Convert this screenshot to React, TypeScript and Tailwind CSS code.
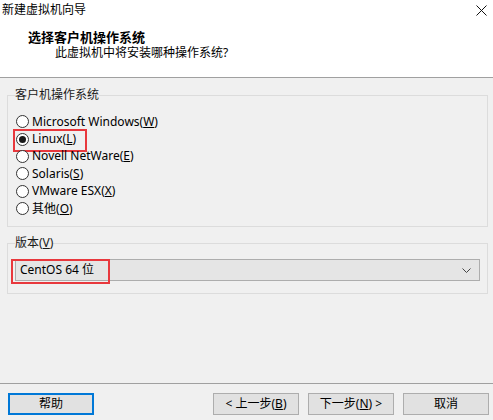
import React from "react";

const font = { fontFamily: '"Noto Sans", "Noto Sans CJK SC", sans-serif' };

const options = [
  { label: "Microsoft Windows", key: "W" },
  { label: "Linux", key: "L" },
  { label: "Novell NetWare", key: "E" },
  { label: "Solaris", key: "S" },
  { label: "VMware ESX", key: "X" },
  { label: "其他", key: "O" },
];

function Radio({ checked }: { checked?: boolean }) {
  return (
    <span className="flex h-[13px] w-[13px] items-center justify-center rounded-full border border-[#333333] bg-white">
      {checked && <span className="h-[7px] w-[7px] rounded-full bg-[#1a1a1a]" />}
    </span>
  );
}

function WinButton({ children, focused }: { children: React.ReactNode; focused?: boolean }) {
  return (
    <button
      className={
        "flex h-[22px] w-[86px] items-center justify-center bg-[#e1e1e1] text-[12px] text-black " +
        (focused ? "border-2 border-[#0078d7]" : "border border-[#adadad]")
      }
    >
      {children}
    </button>
  );
}

export default function App() {
  return (
    <div className="flex h-[420px] w-[493px] flex-col overflow-hidden bg-[#f0f0f0] text-[12px] leading-[16px] text-black" style={font}>
      {/* header */}
      <div className="flex h-[77px] flex-col bg-white">
        <div className="mt-[2px] flex h-[16px] items-center justify-between pl-[2px] pr-[6px]">
          <span>新建虚拟机向导</span>
          <svg width="11" height="11" viewBox="0 0 11 11" className="mt-[1px]">
            <path d="M0.5 0.5 L10.5 10.5 M10.5 0.5 L0.5 10.5" stroke="#111" strokeWidth="1" />
          </svg>
        </div>
        <div className="ml-[28px] mt-[11px] h-[16px] text-[13px] font-bold">选择客户机操作系统</div>
        <div className="ml-[55px] h-[16px]">此虚拟机中将安装哪种操作系统?</div>
      </div>
      <div className="h-px bg-[#a0a0a0]" />

      {/* guest OS group */}
      <fieldset className="ml-[7px] mr-[5px] mt-[9px] border border-[#dcdcdc] px-0 pb-[9px] pt-0">
        <legend className="ml-[7px] px-0 text-[#1a1a1a]">客户机操作系统</legend>
        <div className="mt-[10px] flex flex-col">
          {options.map((o) => (
            <div key={o.key} className="relative flex h-[17.4px] items-center pl-[8px]">
              <Radio checked={o.key === "L"} />
              <span className="ml-[3px]">
                {o.label}(<u>{o.key}</u>)
              </span>
              {o.key === "L" && (
                <span className="absolute left-[5px] top-[-1px] h-[23px] w-[74px] border-2 border-[#e8383d]" />
              )}
            </div>
          ))}
        </div>
      </fieldset>

      {/* version group */}
      <fieldset className="ml-[7px] mr-[5px] mt-[8px] border border-[#dcdcdc] px-0 pb-[12px] pt-0">
        <legend className="ml-[7px] px-0 text-[#1a1a1a]">
          版本(<u>V</u>)
        </legend>
        <div className="relative mx-[7px] mt-[8px] flex h-[22px] items-center justify-between border border-[#adadad] bg-[#e5e5e5] pl-[4px] pr-[8px]">
          <span>CentOS 64 位</span>
          <svg width="9" height="5" viewBox="0 0 9 5">
            <path d="M0.5 0.5 L4.5 4.5 L8.5 0.5" fill="none" stroke="#444" strokeWidth="1" />
          </svg>
          <span className="absolute left-[-5px] top-[-1px] h-[25px] w-[99px] border-2 border-[#e8383d]" />
        </div>
      </fieldset>

      <div className="flex-1" />
      <div className="h-px bg-[#a0a0a0]" />

      {/* buttons */}
      <div className="mb-[5px] mt-[9px] flex items-center pl-[8px] pr-[4px]">
        <WinButton focused>帮助</WinButton>
        <div className="flex-1" />
        <div className="flex gap-[9px]">
          <WinButton>
            &lt; 上一步(<u>B</u>)
          </WinButton>
          <WinButton>
            下一步(<u>N</u>) &gt;
          </WinButton>
          <WinButton>取消</WinButton>
        </div>
      </div>
    </div>
  );
}
